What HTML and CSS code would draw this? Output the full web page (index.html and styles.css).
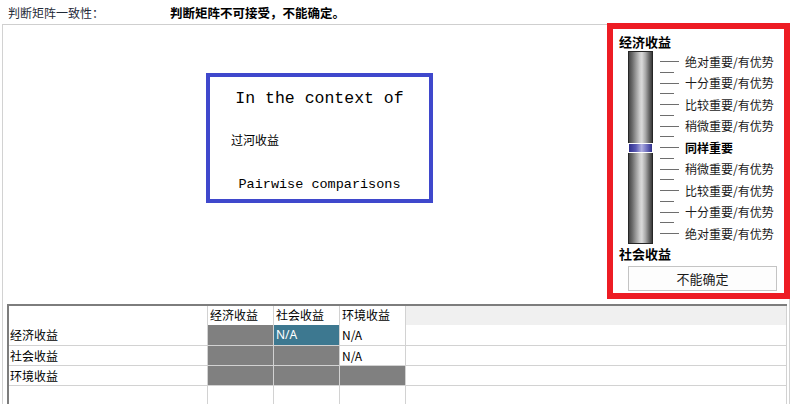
FILE: index.html
```html
<!DOCTYPE html>
<html lang="zh">
<head>
<meta charset="utf-8">
<title>判断矩阵</title>
<link rel="stylesheet" href="styles.css">
</head>
<body>
<div class="topbar">
  <span class="lab">判断矩阵一致性：</span>
  <span class="status">判断矩阵不可接受，不能确定。</span>
</div>
<div class="panel">
  <div class="upper">
    <div class="canvas">
      <div class="ctx">
        <div class="ctx-title">In the context of</div>
        <div class="ctx-node">过河收益</div>
        <div class="ctx-foot">Pairwise comparisons</div>
      </div>
    </div>
    <div class="scale">
      <div class="end">经济收益</div>
      <div class="slider">
        <div class="track"><div class="thumb"></div></div>
        <div class="levels">
          <div class="lvl"><span class="tick"></span><span class="txt">绝对重要/有优势</span></div>
          <div class="lvl"><span class="tick"></span><span class="txt">十分重要/有优势</span></div>
          <div class="lvl"><span class="tick"></span><span class="txt">比较重要/有优势</span></div>
          <div class="lvl"><span class="tick"></span><span class="txt">稍微重要/有优势</span></div>
          <div class="lvl"><span class="tick"></span><span class="txt strong">同样重要</span></div>
          <div class="lvl"><span class="tick"></span><span class="txt">稍微重要/有优势</span></div>
          <div class="lvl"><span class="tick"></span><span class="txt">比较重要/有优势</span></div>
          <div class="lvl"><span class="tick"></span><span class="txt">十分重要/有优势</span></div>
          <div class="lvl last"><span class="tick"></span><span class="txt">绝对重要/有优势</span></div>
        </div>
      </div>
      <div class="end end-b">社会收益</div>
      <div class="btn">不能确定</div>
    </div>
  </div>
  <div class="grid">
    <div class="c hd first"></div>
    <div class="c hd">经济收益</div>
    <div class="c hd">社会收益</div>
    <div class="c hd">环境收益</div>
    <div class="c hd fill"></div>

    <div class="c rl">经济收益</div>
    <div class="c g"></div>
    <div class="c sel">N/A</div>
    <div class="c">N/A</div>
    <div class="c"></div>

    <div class="c rl">社会收益</div>
    <div class="c g"></div>
    <div class="c g"></div>
    <div class="c">N/A</div>
    <div class="c"></div>

    <div class="c rl">环境收益</div>
    <div class="c g"></div>
    <div class="c g"></div>
    <div class="c g"></div>
    <div class="c"></div>

    <div class="c rl"></div>
    <div class="c"></div>
    <div class="c"></div>
    <div class="c"></div>
    <div class="c"></div>
  </div>
</div>
</body>
</html>
```
FILE: styles.css
```css
* { box-sizing: border-box; }
html, body { margin: 0; padding: 0; background: #fff; }
body {
  width: 795px;
  height: 404px;
  overflow: hidden;
  font-family: "Noto Sans CJK SC", "Noto Sans", sans-serif;
  font-size: 12px;
  color: #111;
}

.topbar {
  height: 24px;
  display: flex;
  align-items: center;
  padding-top: 1px;
}
.topbar .lab {
  width: 170px;
  padding-left: 8px;
  color: #1f2a38;
  font-size: 12px;
}
.topbar .status {
  font-weight: bold;
  font-size: 12.5px;
  color: #000;
}

.panel {
  margin-left: 2px;
  width: 788px;
  height: 380px;
  border-top: 1px solid #cfcfcf;
  border-left: 1px solid #d2d2d2;
  border-right: 1px solid #d2d2d2;
}

.upper {
  height: 279px;
  display: flex;
  align-items: flex-start;
}

.canvas {
  flex: 1;
  padding-top: 48px;
  padding-left: 203px;
}

.ctx {
  width: 227px;
  height: 130px;
  border: 4px solid #3f48cc;
  padding-top: 12px;
}
.ctx-title {
  font-family: "Liberation Mono", "DejaVu Sans Mono", monospace;
  font-size: 16.5px;
  line-height: 20px;
  text-align: center;
  color: #000;
}
.ctx-node {
  margin-top: 23px;
  padding-left: 21px;
  line-height: 16px;
  font-size: 12px;
  color: #000;
}
.ctx-foot {
  margin-top: 28px;
  font-family: "Liberation Mono", "DejaVu Sans Mono", monospace;
  font-size: 13.5px;
  line-height: 18px;
  text-align: center;
  color: #000;
}

.scale {
  width: 183px;
  height: 276px;
  margin-top: -2px;
  margin-right: -1px;
  border: 6px solid #ed1c24;
  padding-left: 15px;
}
.end {
  margin-left: -9px;
  margin-top: 5px;
  font-weight: bold;
  font-size: 13px;
  line-height: 16px;
  color: #000;
}
.end-b { margin-top: 1px; }

.slider {
  display: flex;
  align-items: flex-start;
  margin-top: 1px;
}
.track {
  width: 25px;
  height: 193px;
  border: 1px solid #262626;
  background: linear-gradient(to right, #474747 0%, #6a6a6a 14%, #9a9a9a 30%, #cfcfcf 48%, #dadada 56%, #a8a8a8 72%, #666 88%, #3a3a3a 100%);
  display: flex;
  flex-direction: column;
}
.thumb {
  margin: 91px -1px 0;
  height: 10px;
  border: 1px solid #fff;
  background: linear-gradient(to right, #2e2e8c 0%, #5a5ab4 30%, #b0b0e2 55%, #6c6cbe 78%, #2e2e8c 100%);
}

.levels {
  margin-left: 7px;
  display: flex;
  flex-direction: column;
}
.lvl {
  height: 21.5px;
  display: flex;
  align-items: center;
}
.tick {
  width: 19px;
  height: 21.5px;
  background:
    linear-gradient(#6e6e6e, #6e6e6e) no-repeat left center / 19px 1px,
    linear-gradient(#6e6e6e, #6e6e6e) no-repeat left bottom / 14px 1px;
}
.lvl.last .tick {
  background: linear-gradient(#6e6e6e, #6e6e6e) no-repeat left center / 19px 1px;
}
.txt {
  margin-left: 6px;
  line-height: 16px;
  font-size: 12px;
  color: #1a1a1a;
  white-space: nowrap;
}
.txt.strong { font-weight: bold; color: #000; }

.btn {
  margin-top: 4px;
  width: 149px;
  height: 25px;
  border: 1px solid #c4c4c4;
  background: #fdfdfd;
  display: flex;
  align-items: center;
  justify-content: center;
  font-size: 13px;
  color: #1a1a1a;
}

.grid {
  margin-left: 4px;
  width: 780px;
  height: 101px;
  border-top: 2px solid #7d7d7d;
  border-left: 2px solid #7d7d7d;
  display: grid;
  grid-template-columns: 199px 66px 66px 66px 1fr;
  grid-template-rows: 19px 21px 20px 20px 20px;
}
.c {
  border-right: 1px solid #d2d2d2;
  border-bottom: 1px solid #d2d2d2;
  font-size: 12px;
  line-height: 20px;
  padding-left: 2px;
  color: #000;
  white-space: nowrap;
  overflow: hidden;
}
.c.hd { border-bottom: none; line-height: 18px; }
.c.fill { background: #f0f0f0; }
.c.rl { padding-left: 1px; }
.c.g { background: #808080; }
.c.sel { background: #3d7890; color: #fff; font-family: "Noto Sans", sans-serif; }
```
